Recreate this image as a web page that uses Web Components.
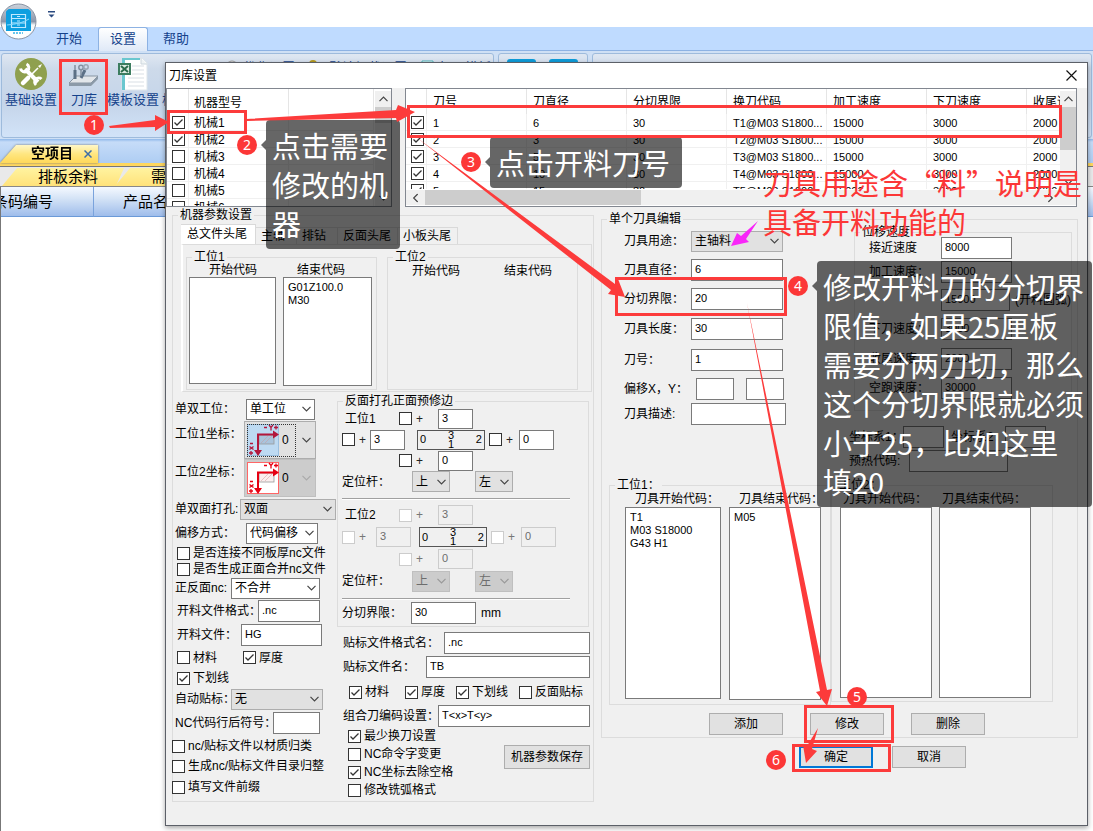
<!DOCTYPE html>
<html lang="zh-CN">
<head>
<meta charset="utf-8">
<title>刀库设置</title>
<style>
html,body{margin:0;height:100%}
body{font:12px/14px "Liberation Sans","Noto Sans CJK SC",sans-serif;color:#000;background:#fff;overflow:hidden;position:relative}
</style>
</head>
<body>
<app-frame></app-frame>
<tool-dialog></tool-dialog>
<note-layer></note-layer>

<script>
const BASE = `*{box-sizing:border-box} input,select,textarea,button{font:inherit;color:inherit;margin:0;border-radius:0;outline:0} :host([hidden]){display:none}`;
function define(name, css, html) {
  customElements.define(name, class extends HTMLElement {
    constructor() { super(); this.attachShadow({ mode: "open" }); }
    connectedCallback() {
      if (this.shadowRoot.childNodes.length) return;
      const t = document.createElement("template");
      t.innerHTML = `<style>${BASE}${css}</style>` + (typeof html === "function" ? html(this, n => this.getAttribute(n) || "") : html);
      this.shadowRoot.append(t.content.cloneNode(true));
    }
  });
}
const esc = s => s.replace(/</g, "&lt;").replace(/>/g, "&gt;").replace(/"/g, "&quot;");
const CHEV = `<svg width="9" height="6" viewBox="0 0 9 6"><path d="M.5 .8 4.5 4.8 8.5 .8" fill="none" stroke="currentColor" stroke-width="1.2"/></svg>`;
const TICK = `url("data:image/svg+xml,%3Csvg xmlns='http://www.w3.org/2000/svg' width='11' height='11'%3E%3Cpath d='M1.5 5.5 4 8 9.5 2.5' fill='none' stroke='%23333' stroke-width='1.3'/%3E%3C/svg%3E")`;
const CHECKCSS = `input[type=checkbox]{appearance:none;flex:none;width:13px;height:13px;border:1px solid #333;background:#fff}
input[type=checkbox]:checked{background:#fff ${TICK} center no-repeat}
input[type=checkbox]:disabled{border-color:#ccc}`;
const TEXTCSS = `.t{height:22px;border:1px solid #7a7a7a;background:#fff;padding:0 4px 2px 3px;font-size:11px;min-width:0}
.t:disabled{border-color:#ccc;background:#f0f0f0;color:#6d6d6d}`;
const SELCSS = `.s{display:grid;height:21px;align-items:center}
.s select{grid-area:1/1;width:100%;height:100%;appearance:none;background:#fff;border:1px solid #7a7a7a;padding:0 14px 0 3px;opacity:1}
.s svg{grid-area:1/1;justify-self:end;margin-right:4px;color:#444;pointer-events:none}
:host([flat]) select{background:#e1e1e1;border-color:#adadad}
:host([off]) select{background:#ccc;border-color:#bfbfbf;color:#6d6d6d}
:host([off]) svg{color:#999}`;

/* ---------- form parts ---------- */
define("x-check", `:host{display:flex;align-items:center}label{white-space:nowrap;margin-left:3px}${CHECKCSS}`,
  (e, a) => `<input id="c" type="checkbox" ${e.hasAttribute("on") ? "checked" : ""} ${a("name") ? `aria-label="${a("name")}"` : ""}>${a("text") ? `<label for="c">${a("text")}</label>` : ""}`);

define("x-field", `:host{display:flex;align-items:center;min-width:0}label{white-space:nowrap;flex:none}span{margin-left:5px}${TEXTCSS}`,
  (e, a) => `<label for="f" style="width:${a("lw")}px">${a("text")}</label><input class="t" id="f" type="text" value="${esc(a("value"))}" style="${a("w") ? `width:${a("w")}px` : "flex:1"}">${a("unit") ? `<span>${a("unit")}</span>` : ""}`);

define("x-select", `:host{display:flex;align-items:center}label{white-space:nowrap;flex:none}${SELCSS}`,
  (e, a) => `${a("text") ? `<label for="s" style="width:${a("lw")}px">${a("text")}</label>` : ""}<div class="s" style="width:${a("w")}px"><select id="s" ${a("name") ? `aria-label="${a("name")}"` : ""} ${e.hasAttribute("off") ? "disabled" : ""}><option>${a("value")}</option></select>${CHEV}</div>`);

define("x-origin", `:host{display:flex}label{width:69px;line-height:26px;white-space:nowrap}
.b{display:grid;width:72px;height:38px;align-items:center;background:#e1e1e1;border:1px solid #adadad}
.pic{grid-area:1/1;margin-left:2px;z-index:1;pointer-events:none}
select{grid-area:1/1;width:100%;height:34px;appearance:none;border:0;background:none;padding:0 0 0 37px;opacity:1;color:#000}
.ch{grid-area:1/1;justify-self:end;margin-right:4px;color:#444;line-height:0;pointer-events:none}
.f{grid-area:1/1;width:49px;height:33px;margin-left:2px;border:1px dotted #333;z-index:2;pointer-events:none}
:host([off]) .b{background:#ccc;border-color:#bfbfbf}:host([off]) .ch{color:#aaa}:host([off]) .f{display:none}`,
  (e, a) => { const off = e.hasAttribute("off"), c = off ? "#e60012" : "#b3173c", g = off ? "#fff" : "#bddaf2";
    return `<label for="s">${a("text")}</label><div class="b"><svg class="pic" width="33" height="33" viewBox="0 0 33 33"><rect x=".5" y=".5" width="31" height="31" fill="${g}" stroke="${off ? "#f66" : "#9bc0e0"}"/><rect x="12" y="11" width="15" height="9" fill="${off ? "#fbeeee" : "#a9c4dc"}" stroke="#999" stroke-width=".8"/><path d="M14 19l7-7M18 19l7-7" stroke="#c99" stroke-width=".5"/><path d="M11 27V10.500H27" fill="none" stroke="${c}" stroke-width="2"/><path d="M26 6.500l6 4-6 4zM7 26h8l-4 6z" fill="${c}"/><path d="M17 3.500h3M27 3.500h4M29 1.500v4M22 1l2 2.500 2-2.500M24 3.500v3M3 19.500h3M2 29h4M4 27v4M2.500 22.500l4 3M6.500 22.500l-4 3" stroke="${c}" stroke-width="1.300" fill="none"/></svg><select id="s" ${off ? "disabled" : ""}><option>0</option></select><span class="ch">${CHEV}</span><span class="f"></span></div>`; });

define("x-edge", `:host{display:flex;align-items:center}span{padding-left:4px;flex:none;color:#222}:host([off]) span{color:#777}${CHECKCSS}${TEXTCSS}.t{height:20px;width:35px;font-size:11px}`,
  (e, a) => { const d = e.hasAttribute("off") ? "disabled" : ""; return `<input type="checkbox" aria-label="${a("name")}启用" ${d}><span style="width:${a("gap")}px">+</span><input class="t" type="text" aria-label="${a("name")}" value="${a("value")}" ${d}>`; });

define("x-plate", `:host{display:grid;grid-template-columns:1fr 1fr 1fr;grid-template-rows:9px 9px;width:68px;height:20px;border:1px solid #555;padding:0 2px;font-size:11px;line-height:9px;flex:none}
.l{grid-area:1/1/3/2;align-self:center}.r{grid-area:1/3/3/4;align-self:center;text-align:right}.m{grid-column:2;text-align:center}`,
  `<span class="l">0</span><span class="m">3</span><span class="m">1</span><span class="r">2</span>`);

define("x-area", `:host{display:flex;flex-direction:column}label{padding-left:var(--lp,10px);white-space:nowrap;line-height:var(--lh,14px)}
textarea{width:100%;resize:none;border:1px solid #7a7a7a;background:#fff;padding:3px 4px;font-size:11px;line-height:13px;overflow:hidden;display:block}`,
  (e, a) => `<label for="a">${a("text")}</label><textarea id="a" style="height:${a("h")}px">${esc(a("value"))}</textarea>`);

define("x-box", `:host{display:block}fieldset{margin:0;padding:0;border:1px solid #dcdcdc;min-width:0;height:100%}legend{margin-left:5px;padding:0 2px;line-height:12px}`,
  (e, a) => `<fieldset><legend>${a("text")}</legend><slot></slot></fieldset>`);

define("x-button", `:host{display:block}button{width:100%;height:22px;border:1px solid #adadad;background:#e1e1e1;padding:0;line-height:18px;display:block}:host([primary]) button{border:2px solid #0078d7}:host([tall]) button{height:24px}`,
  `<button type="button"><slot></slot></button>`);

/* ---------- lists ---------- */
const BARCSS = `.v{flex:none;width:16px;margin-top:2px;background:#f0f0f0;display:flex;flex-direction:column;align-items:center;color:#444}
.v svg,.h svg{flex:none}.v i{flex:none;width:16px;background:#cdcdcd}.v .sp,.h .sp{flex:1}.v svg{margin:5px 0}.up{transform:rotate(180deg)}
.h{flex:none;height:15px;background:#f0f0f0;display:flex;align-items:center;color:#444}.h i{height:15px;background:#cdcdcd}.lf{transform:rotate(90deg)}.rt{transform:rotate(-90deg)}.h svg{margin:0 5px}`;
const TABLECSS = `table{border-collapse:separate;border-spacing:0;table-layout:fixed}
th{height:25px;font-weight:400;text-align:left;border-right:1px solid #e5e5e5;white-space:nowrap}
td{height:17px;border-right:1px solid #f0f0f0;border-bottom:1px solid #f0f0f0;white-space:nowrap;line-height:14px}th,td{padding:0 0 0 6px;overflow:hidden}td:first-child{padding-left:5px}td+td{padding-top:2px}`;
const bar = (svgClass) => CHEV.replace("<svg", `<svg class="${svgClass}"`);

define("machine-list", `:host{display:flex;width:226px;height:119px;border:1px solid #828790;background:#fff;overflow:hidden}.w{flex:1;overflow:hidden}${TABLECSS}${BARCSS}th{padding-top:3px}th,td+td{padding-left:5px}`,
  () => `<div class="w"><table><colgroup><col style="width:22px"><col style="width:100px"><col style="width:85px"></colgroup><thead><tr><th></th><th>机器型号</th><th></th></tr></thead><tbody>${[1,2,3,4,5,6].map(i => `<tr><td><x-check name="机械${i}" ${i < 3 ? "on" : ""}></x-check></td><td>机械${i}</td><td></td></tr>`).join("")}</tbody></table></div>
<div class="v">${bar("up")}<i style="height:16px"></i><span class="sp"></span>${bar("")}</div>`);

define("tool-list", `:host{display:flex;flex-direction:column;flex:1;min-width:0;height:119px;border:1px solid #828790;background:#fff;overflow:hidden}.row{display:flex;flex:1;min-height:0}.w{flex:1;overflow:hidden;height:100px}${TABLECSS}${BARCSS}td{font-size:11px}.h{margin-bottom:1px}`,
  () => `<div class="row"><div class="w"><table style="width:721px"><colgroup><col style="width:21px">${'<col style="width:100px">'.repeat(7)}</colgroup><thead><tr><th></th><th>刀号</th><th>刀直径</th><th>分切界限</th><th>换刀代码</th><th>加工速度</th><th>下刀速度</th><th>收尾速度</th></tr></thead><tbody>${[[1,6],[2,3],[3,5],[4,10],[5,15]].map(([n, d]) => `<tr><td><x-check name="刀${n}" on></x-check></td><td>${n}</td><td>${d}</td><td>30</td><td>T${n}@M03 S1800...</td><td>15000</td><td>3000</td><td>2000</td></tr>`).join("")}</tbody></table></div>
<div class="v">${bar("up")}<i style="height:43px"></i><span class="sp"></span>${bar("")}</div></div>
<div class="h">${bar("lf")}<i style="width:216px"></i><span class="sp"></span>${bar("rt")}<span style="width:16px"></span></div>`);

/* ---------- machine parameters ---------- */
define("code-tabs", `:host{display:block;margin-left:8px;padding-top:4px}
.tabs{display:flex;align-items:flex-end;height:19px}
.tabs button{height:17px;min-width:41px;padding:0 6px 0 5px;text-align:left;border:1px solid #d9d9d9;border-width:1px 1px 0 0;background:#f0f0f0;white-space:nowrap;line-height:15px}
.tabs button[aria-selected=true]{height:20px;width:75px;background:#fff;padding:0 6px}
.page{display:flex;gap:10px;height:148px;border:1px solid #dcdcdc;border-left:2px solid #fff;padding:6px 0 1px 3px;margin-right:1px}
.a{display:flex;gap:7px;padding-left:2px}.n{display:flex;gap:44px;padding-left:24px;line-height:16px}x-box{flex:none;width:191px}`,
  `<div class="tabs" role="tablist"><button role="tab" aria-selected="true">总文件头尾</button><button role="tab">主轴</button><button role="tab">排钻</button><button role="tab">反面头尾</button><button role="tab">小板头尾</button></div>
<div class="page"><x-box text="工位1"><div class="a"><x-area text="开始代码" style="width:87px;--lp:20px" h="107"></x-area><x-area text="结束代码" style="width:89px;--lp:14px" h="109" value="G01Z100.0
M30"></x-area></div></x-box><x-box text="工位2"><div class="n"><span>开始代码</span><span>结束代码</span></div></x-box></div>`);

define("trim-panel", `:host{display:block;padding-top:1px}
.r{display:flex;align-items:center;height:21px;padding-left:4px}.r.w{height:22px}.t{padding-left:7px}.t>span{width:54px}
hr{margin:6px 18px 0 4px;border:0;height:2px;background:#a0a0a0;border-bottom:1px solid #fff}.g{padding-top:4px}.c{padding-left:61px}.f{height:26px}`,
  () => {
    const st = (n, off, gap) => { const w = off ? " w" : "", o = off ? "off" : "";
      return `<div class="r t${w}"><span>工位${n}</span><x-edge gap="26" name="上边" value="3" ${o}></x-edge></div>
<div class="r${w}"><x-edge gap="${gap}" name="左边" value="3" ${o}></x-edge><x-plate style="margin:0 4px 0 ${off ? 8 : 12}px"></x-plate><x-edge gap="17" name="右边" value="0" ${o}></x-edge></div>
<div class="r c${w}"><x-edge gap="26" name="下边" value="0" ${o}></x-edge></div>
<div class="r${w}"><x-select text="定位杆：" lw="70" w="38" value="上" flat ${o}></x-select><x-select style="margin-left:25px" name="定位杆方向" w="38" value="左" flat ${o}></x-select></div>`; };
    return st(1, false, 15) + `<hr><div class="g">` + st(2, true, 21) + `</div><hr><div class="r f"><x-field text="分切界限：" lw="69" w="65" value="30" unit="mm"></x-field></div>`;
  });

define("machine-params", `:host{display:block;flex:none;width:422px}
.cols{display:flex;padding-bottom:2px}
.a{width:164px;flex:none;display:grid;grid-template-rows:24px 38px 38px 24px 24px 16px 16px 22px 24px 24px 21px 20px 22px 26px 20px 20px 22px;padding-top:5px}
.a>*{margin-left:2px}.a>.in{margin-left:4px}.a>.out{margin-left:-1px}.pair{display:flex}.pair>*:first-child{width:66px}
.b{flex:1;min-width:0;padding:3px 3px 0 0}x-box.trim{width:252px}
.low{display:grid;grid-template-columns:minmax(0,1fr);grid-template-rows:24px 24px 26px 22px;padding:4px 0 0 6px}.cs{display:flex;gap:16px;padding-left:6px}.cs :nth-child(3),.cs :nth-child(4){margin-left:-5px}
.end{display:flex;justify-content:space-between;padding-left:11px}.end>div{display:grid;grid-auto-rows:18px}.end x-button{width:86px;margin-top:18px}`,
  `<x-box text="机器参数设置"><code-tabs></code-tabs><div class="cols"><div class="a">
<x-select text="单双工位：" lw="71" w="69" value="单工位"></x-select>
<x-origin text="工位1坐标："></x-origin><x-origin text="工位2坐标：" off></x-origin>
<x-select text="单双面打孔:" lw="65" w="96" value="双面" flat></x-select>
<x-select text="偏移方式：" lw="71" w="72" value="代码偏移"></x-select>
<x-check class="in" text="是否连接不同板厚nc文件"></x-check><x-check class="in" text="是否生成正面合并nc文件"></x-check>
<x-select text="正反面nc:" lw="56" w="89" value="不合并"></x-select>
<x-field class="in" text="开料文件格式：" lw="81" w="62" value=".nc"></x-field>
<x-field class="in" text="开料文件：" lw="64" w="81" value="HG"></x-field>
<div class="pair in"><x-check text="材料"></x-check><x-check text="厚度" on></x-check></div>
<x-check class="in" text="下划线" on></x-check>
<x-select text="自动贴标：" lw="56" w="92" value="无" flat></x-select>
<x-field text="NC代码行后符号：" lw="98" w="47"></x-field>
<x-check class="out" text="nc/贴标文件以材质归类"></x-check><x-check class="out" text="生成nc/贴标文件目录归整"></x-check><x-check class="out" text="填写文件前缀"></x-check>
</div><div class="b"><x-box class="trim" text="反面打孔正面预修边"><trim-panel></trim-panel></x-box>
<div class="low"><x-field text="贴标文件格式名：" lw="101" value=".nc"></x-field><x-field text="贴标文件名：" lw="83" value="TB"></x-field>
<div class="cs"><x-check text="材料" on></x-check><x-check text="厚度" on></x-check><x-check text="下划线" on></x-check><x-check text="反面贴标"></x-check></div>
<x-field text="组合刀编码设置：" lw="95" value="T&lt;x&gt;T&lt;y&gt;"></x-field></div>
<div class="end"><div><x-check text="最少换刀设置" on></x-check><x-check text="NC命令字变更"></x-check><x-check text="NC坐标去除空格" on></x-check><x-check text="修改铣弧格式"></x-check></div><x-button tall>机器参数保存</x-button></div>
</div></div></x-box>`);

/* ---------- single tool editor ---------- */
define("tool-editor", `:host{display:block}
.top{display:flex;justify-content:space-between;padding-top:1px}
.l{display:grid;grid-template-rows:30px 28px 30px 30px 32px 25px 26px;padding-left:22px;flex:none}
.xy{display:flex;gap:12px}
.rt{width:223px;flex:none;margin-right:5px}.sp{width:218px;margin-left:5px}
.g{display:grid;grid-template-rows:20px 28px 28px 30px 30px 28px;padding:0 0 8px 14px}
.o{padding:14px 0 0;display:grid;grid-template-rows:24px 24px}.o div{display:flex;gap:7px}
.st{display:flex;margin:6px 0 0 7px;--lh:16px;align-items:flex-start}.st x-box{width:222px}.st .c{display:flex;gap:8px;padding:0 0 4px 15px}.st .d{gap:7px;padding:0 0 3px 8px;--lp:3px}
.bt{display:flex;gap:27px;padding:8px 0 2px 107px}.bt x-button{width:74px}`,
  `<x-box text="单个刀具编辑"><div class="top"><div class="l">
<x-select text="刀具用途：" lw="67" w="92" value="主轴料" flat></x-select>
<x-field text="刀具直径：" lw="67" w="92" value="6"></x-field><x-field text="分切界限：" lw="67" w="92" value="20"></x-field><x-field text="刀具长度：" lw="67" w="92" value="30"></x-field><x-field text="刀号：" lw="67" w="92" value="1"></x-field>
<div class="xy"><x-field text="偏移X，Y：" lw="72" w="38"></x-field><x-field lw="0" w="38"></x-field></div>
<x-field text="刀具描述:" lw="67" w="95"></x-field></div>
<div class="rt"><x-box class="sp" text="位移速度"><div class="g">
<x-field text="接近速度" lw="72" w="71" value="8000"></x-field><x-field text="加工速度：" lw="72" w="71" value="15000"></x-field><x-field text="" lw="72" w="71" value="15000" unit="(开料圆弧)" style="white-space:nowrap"></x-field><x-field text="下刀速度：" lw="72" w="71" value="3000"></x-field><x-field text="收尾速度：" lw="72" w="71" value="2000"></x-field><x-field text="空跑速度：" lw="72" w="71" value="30000"></x-field></div></x-box>
<div class="o"><div><x-field text="坐标系1：" lw="54" w="41"></x-field><x-field text="坐标系2：" lw="54" w="41"></x-field></div><x-field text="预热代码:" lw="60" w="99"></x-field></div></div></div>
<div class="st"><x-box text="工位1："><div class="c"><x-area text="刀具开始代码：" style="width:96px" h="192" value="T1
M03 S18000
G43 H1"></x-area><x-area text="刀具结束代码：" style="width:92px" h="193" value="M05"></x-area></div></x-box>
<x-box text="工位2："><div class="c d"><x-area text="刀具开始代码：" style="width:92px" h="191"></x-area><x-area text="刀具结束代码：" style="width:92px" h="191"></x-area></div></x-box></div>
<div class="bt"><x-button>添加</x-button><x-button>修改</x-button><x-button>删除</x-button></div></x-box>`);

define("tool-dialog", `:host{position:absolute;top:62px;left:165px;right:5px;border:1px solid #5c6068;background:#f0f0f0;box-shadow:0 2px 5px rgba(0,0,0,.35)}
header{height:25px;background:#fff;display:flex;align-items:center;justify-content:space-between;padding:0 10px 0 3px}
header button{border:0;background:none;padding:0;line-height:0}h1{font:inherit;margin:0}
.lists{display:flex;gap:13px;padding-right:10px}.main{display:flex;gap:7px;padding:2px 9px 23px 6px}
.right{flex:1;min-width:0;padding-top:4px}.ok{display:flex;gap:19px;padding:8px 0 0 198px}.ok x-button{width:74px}`,
  `<header><h1>刀库设置</h1><button type="button" aria-label="关闭"><svg width="11" height="11" viewBox="0 0 11 11"><path d="M.5 .5l10 10M10.500 .5l-10 10" stroke="#111" stroke-width="1.200"/></svg></button></header>
<div class="lists"><machine-list></machine-list><tool-list></tool-list></div>
<div class="main"><machine-params></machine-params><div class="right"><tool-editor></tool-editor><div class="ok"><x-button primary>确定</x-button><x-button>取消</x-button></div></div></div>`);

/* ---------- host application ---------- */
define("ribbon-item", `:host{display:flex;flex-direction:column;align-items:center;color:#15428b;font-size:13px;flex:none}a{color:inherit;text-decoration:none;display:flex;flex-direction:column;align-items:center;gap:1px;line-height:16px;white-space:nowrap}.i{height:34px;display:flex;align-items:center}`,
  (e, a) => `<a href="#"><span class="i"><slot></slot></span>${a("text")}</a>`);

define("app-frame", `:host{display:flex;flex-direction:column;min-height:100%;background:#fff;color:#15428b}
.title{height:27px;display:flex;padding-left:47px;align-items:center}
.orb{position:absolute;left:0;top:2px}
nav{height:24px;background:#bfdbff;display:flex;padding-left:44px;font-size:13px;line-height:24px;border-bottom:1px solid #8db2e3}
nav a{color:#15428b;text-decoration:none;width:50px;text-align:center;margin-right:4px}nav a.on{background:linear-gradient(#fff,#dfe9f7);border:1px solid #8db2e3;border-bottom:0;border-radius:3px 3px 0 0;line-height:22px;height:24px;margin-right:3px}
.rib{height:88px;background:#cfe0f5;padding:2px 1px 1px;display:flex;gap:4px}
.grp{display:flex;border:1px solid #9ebbdc;border-radius:3px;background:linear-gradient(#dfe7f2,#cddaea 18%,#c5d5ea 60%,#d2e3f8);padding:3px 0 0 3px;overflow:hidden}
.g1{width:493px;gap:11px}.g2{width:90px;padding:5px 8px;gap:13px}.g3{flex:1}
.small{display:flex;gap:14px;font-size:13px;white-space:nowrap;line-height:18px;padding-top:2px}.small span{display:flex;gap:4px;align-items:flex-start}.small svg{margin-top:1px}
.g2 i{width:29px;height:29px;background:#0d9bd8;border-radius:3px}
.docs{height:27px;background:linear-gradient(#8fb8ea 0,#c6dcf8 3px,#aecdf3);border-bottom:3px solid #ffd75e;display:flex;align-items:flex-end}
.tab{display:flex;align-items:center;color:#000;filter:drop-shadow(0 0 1px #777)}
.tab b{display:block;height:18px;line-height:16px;font-size:14px;background:linear-gradient(#fff7c8,#ffe680 50%,#ffd95a);clip-path:polygon(16px 0,100% 0,100% 100%,0 100%);padding-left:31px;width:98px}
.tab svg{margin-left:-14px;position:relative}
.sub{height:20px;border-top:1px solid #777;background:#e9e9ea;display:flex;align-items:flex-end;color:#000;font-size:15px}
.sub span{height:18px;line-height:17px;width:122px;padding-left:36px;background:linear-gradient(#fff3a0,#ffe27a);clip-path:polygon(15px 0,100% 0,calc(100% - 8px) 100%,0 100%);margin-left:2px;white-space:nowrap;flex:none}.sub span+span{margin-left:-9px}
.tbl{overflow:hidden;border-left:1px solid #777;flex:1;border-top:1px solid #888}
table{margin-left:-20px;border-spacing:0;width:1200px;table-layout:fixed;color:#000;font-size:15px}th{height:30px;font-weight:400;text-align:left;padding:0 0 0 12px;border-right:1px solid #7aa3dc;background:linear-gradient(#f5f9ff,#d4e3f6 40%,#9fbdeb);border-bottom:1px solid #6b9ad8}th+th{padding-left:29px}`,
  `<div class="title"><svg width="8" height="8" viewBox="0 0 8 8"><path d="M1 1h7v1.500H1zM1.500 4.500h6L4.500 7.500z" fill="#2b4a80"/></svg></div>
<svg class="orb" width="38" height="39" viewBox="0 0 38 39"><defs><linearGradient id="q" x2="0" y2="1"><stop stop-color="#cdd3dc"/><stop offset=".5" stop-color="#8b97ab"/><stop offset=".6" stop-color="#f4f6f8"/><stop offset="1" stop-color="#fff"/></linearGradient><clipPath id="k"><circle cx="18.500" cy="19.500" r="16"/></clipPath></defs><circle cx="18.500" cy="19.500" r="17.500" fill="url(#q)" stroke="#8a93a3"/><g clip-path="url(#k)"><rect x="6" y="7" width="25" height="22" fill="#0d9fe0"/><path d="M6 29h25v6H6z" fill="#fff"/></g><path d="M11.500 12.500h14v13h-14zM11.500 16.500h14M11.500 21h14M17 14.500h3M17 19h3M17 23h3" fill="none" stroke="#bfe9ff" stroke-width="1.200"/><path d="M7 23q14-1 22-6" stroke="#8edcff" fill="none"/><path d="M13 31h10" stroke="#38b4e8" stroke-dasharray="2 1" stroke-width="1.500"/></svg>
<nav><a href="#">开始</a><a class="on" href="#">设置</a><a href="#">帮助</a></nav>
<div class="rib"><div class="grp g1">
<ribbon-item text="基础设置"><svg width="34" height="34" viewBox="0 0 34 34"><circle cx="17" cy="17" r="16" fill="#8fa04e"/><g stroke="#fff" fill="none"><path d="M11 12L24 25" stroke-width="4"/><path d="M24 11l-9 9" stroke-width="1.600"/><path d="M14 21l-5 5" stroke-width="4.500" stroke-linecap="round"/><path d="M12.500 7A4.200 4.200 0 1 1 6.500 11.500M22 28a4 4 0 1 1 5.500-6" stroke-width="3"/></g><path d="M24 9l4-2-2 4z" fill="#fff"/></svg></ribbon-item>
<ribbon-item text="刀库"><svg width="32" height="32" viewBox="0 0 32 32"><path d="M8 18h22l-7 7H1z" fill="#e2e6ea" stroke="#8895a3"/><path d="M1 25h22v3H1zM23 25l7-7v3l-7 7z" fill="#8c9aa8"/><path d="M7 12v9M17 12l-4 8" stroke="#5c7086" stroke-width="3"/><path d="M7 7v5M13 12v6" stroke="#8290a0" stroke-width="1.500"/><circle cx="13" cy="9.500" r="2.200" fill="none" stroke="#8290a0" stroke-width="1.500"/><circle cx="18" cy="9" r="2.200" fill="none" stroke="#9aa6b3" stroke-width="1.500"/></svg></ribbon-item>
<ribbon-item text="模板设置" style="margin-left:-4px"><svg width="30" height="34" viewBox="0 0 30 34"><path d="M4 1h20l5 5v27H4z" fill="#fff" stroke="#dde5ea"/><path d="M4 1h3v32H4z" fill="#6ac7cf"/><path d="M7 2h15" stroke="#6ac7cf" stroke-width="2"/><path d="M23 1v6h6" fill="#eef3f5" stroke="#ccd6dd"/><path d="M14 9h12M14 13h12M14 17h12M10 21h16M10 25h16M10 29h16" stroke="#d9dfe5"/><path d="M0 6h13v12H0z" fill="#3d7d5f"/><path d="M2 8h9v8H2z" fill="#dcebe2"/><path d="M3 9l7 6M10 9l-7 6" stroke="#2c6b4c" stroke-width="2"/></svg></ribbon-item>
<ribbon-item text="板材设置" style="margin-left:-8px"></ribbon-item>
<div class="small"><span><svg width="14" height="14" viewBox="0 0 14 14"><circle cx="7" cy="7" r="6" fill="#eee" stroke="#999"/><path d="M7 3v4h3" stroke="#888" fill="none"/></svg>优化设置</span><span><svg width="16" height="14" viewBox="0 0 16 14"><circle cx="4" cy="4" r="3" fill="none" stroke="#b49a20" stroke-width="2"/><path d="M7 4h9" stroke="#b49a20" stroke-width="2"/></svg>默认加载设置</span><span><svg width="14" height="14" viewBox="0 0 14 14"><path d="M1 1h11v12H1z" fill="#fff" stroke="#4ab1b8"/><path d="M3 4h7" stroke="#36866a" stroke-width="2"/></svg>打开模板</span></div></div>
<div class="grp g2"><i></i><i></i></div><div class="grp g3"></div></div>
<div class="docs"><div class="tab"><b>空项目</b><svg width="8" height="8" viewBox="0 0 8 8"><path d="M.5 .5l7 7M7.500 .5l-7 7" stroke="#3d6ea8" stroke-width="1.500"/></svg></div></div>
<div class="sub"><span>排板余料</span><span>需求清单</span></div>
<div class="tbl"><table><colgroup><col style="width:113px"><col style="width:180px"><col></colgroup><thead><tr><th>条码编号</th><th>产品名称</th><th></th></tr></thead></table></div>`);

/* ---------- tutorial notes drawn over the window ---------- */
define("note-tip", `:host{position:absolute;background:rgba(0,0,0,.6);border-radius:4px;color:#fff;padding:6px 6px;font:29px/39px "Noto Sans CJK SC",sans-serif;white-space:nowrap}
i{position:absolute;left:-5px;top:20px;border:5px solid transparent;border-left:0;border-right-color:rgba(0,0,0,.6)}`, `<i></i><slot></slot>`);
define("note-badge", `:host{position:absolute;width:20px;height:20px;border-radius:50%;background:#fc3737;color:#fff;font:14px/20px "Noto Sans",sans-serif;text-align:center}`, `<slot></slot>`);
define("note-frame", `:host{position:absolute;border:3px solid #fc3b3b}`, ``);

define("note-layer", `:host{position:absolute;inset:0;pointer-events:none;overflow:hidden}
svg{position:absolute;left:0;top:0}p{position:absolute;left:763px;top:163px;margin:0;font:29px/39px "Noto Sans CJK SC",sans-serif;color:#fc3737;white-space:nowrap}`,
  () => {
    const box = (x, y, w, h) => `<note-frame style="left:${x}px;top:${y}px;width:${w}px;height:${h}px"></note-frame>`;
    const tip = (x, y, w, t) => `<note-tip style="left:${x}px;top:${y}px;width:${w}px">${t}</note-tip>`;
    const num = (n, x, y) => `<note-badge style="left:${x}px;top:${y}px">${n}</note-badge>`;
    return tip(266, 120, 134, "点击需要<br>修改的机<br>器") + tip(490, 137, 192, "点击开料刀号") + tip(817, 261, 275, "修改开料刀的分切界<br>限值，如果25厘板<br>需要分两刀切，那么<br>这个分切界限就必须<br>小于25，比如这里<br>填20")
    + `<p>刀具用途含“料”说明是<br>具备开料功能的</p>`
    + box(59, 59, 49, 56) + box(167, 110, 80, 24) + box(407, 105, 655, 33) + box(615, 277, 172, 39) + box(804, 705, 90, 38) + box(792, 744, 99, 28)
    + `<svg width="1093" height="831" viewBox="0 0 1093 831"><g fill="#fc3b3b"><path d="M109 126l46-6v-5l14 7-14 9v-4l-45 1z"/><path d="M246 119l150-9 2-5 17 7-18 10-1-4-149 3z"/><path d="M416 137l199 147 3-5 7 18-17-3 3-4z"/><path d="M747 303l80 387 5-1-5 17-11-14 4-1z"/><path d="M818 728l-6 21 5 2-11 12-3-18 4 1z"/></g><path d="M731 246l6-13 4 3 17-15-12 18 3 3z" fill="#f826f8"/></svg>`
    + num(1, 84, 115) + num(2, 237, 135) + num(3, 461, 152) + num(4, 788, 276) + num(5, 847, 687) + num(6, 766, 750);
  });
</script>
</body>
</html>
